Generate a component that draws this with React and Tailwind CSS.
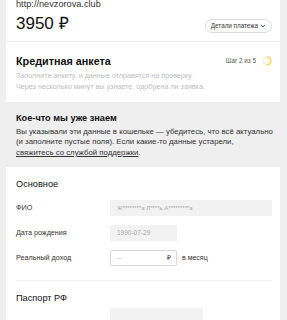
export default function App() {
  const font = { fontFamily: '"Liberation Sans", Arial, sans-serif' };
  return (
    <div className="w-[287px] h-[320px] overflow-hidden bg-[#efefef] text-[#222]" style={font}>
      <div className="mx-[6px] w-[274px] bg-white">
        <div className="h-[42px] border-b border-[#ececec] pl-[10px] pr-[8px] relative">
          <div className="absolute left-[10px] top-[-1px] text-[9.2px] leading-[11px] text-[#333]">http://nevzorova.club</div>
          <div className="absolute left-[10px] top-[14px] text-[17px] leading-[20px] text-[#111]">3950 ₽</div>
          <div className="absolute right-[8px] top-[19px] h-[14px] px-[5px] rounded-full border border-[#dcdcdc] flex items-center gap-[2px] text-[6.3px] text-[#333]">
            Детали платежа
            <svg width="6" height="6" viewBox="0 0 10 10"><path d="M2 3.5 L5 6.5 L8 3.5" fill="none" stroke="#333" strokeWidth="1.6" /></svg>
          </div>
        </div>
        <div className="h-[60px] pl-[10px] pr-[8px] pt-[12px]">
          <div className="flex items-center justify-between">
            <div className="text-[10.8px] leading-[14px] font-semibold text-[#111]">Кредитная анкета</div>
            <div className="flex items-center gap-[6px]">
              <span className="text-[6.3px] text-[#555]">Шаг 2 из 5</span>
              <svg width="10" height="10" viewBox="0 0 20 20">
                <circle cx="10" cy="10" r="7.5" fill="none" stroke="#eeeeee" strokeWidth="3" />
                <path d="M10 2.5 A7.5 7.5 0 0 1 10 17.5" fill="none" stroke="#ffdb4d" strokeWidth="3" />
              </svg>
            </div>
          </div>
          <div className="mt-[2px] text-[7.2px] leading-[11px] text-[#bdbdbd]">
            Заполните анкету, и данные отправятся на проверку.<br />
            Через несколько минут вы узнаете, одобрена ли заявка.
          </div>
        </div>
      </div>
      <div className="h-[65px] pl-[16px] pt-[10px]">
        <div className="text-[9.2px] leading-[12px] font-bold text-[#111]">Кое-что мы уже знаем</div>
        <div className="mt-[3px] text-[7.8px] leading-[10.4px] text-[#333]">
          Вы указывали эти данные в кошельке — убедитесь, что всё актуально<br />
          (и заполните пустые поля). Если какие-то данные устарели,<br />
          <span className="underline">свяжитесь со службой поддержки</span>.
        </div>
      </div>
      <div className="mx-[6px] w-[274px] bg-white pl-[10px] pr-[8px] pt-[11px] h-[160px]">
        <div className="text-[9.2px] leading-[12px] text-[#111]">Основное</div>
        <div className="mt-[10px] flex items-center h-[16px]">
          <div className="w-[94px] text-[7.2px] text-[#333]">ФИО</div>
          <div className="flex-1 h-[16px] bg-[#f2f2f2] flex items-center pl-[7px] text-[6px] text-[#aaa]">Ж********а Л****ь А*********а</div>
        </div>
        <div className="mt-[9px] flex items-center h-[16px]">
          <div className="w-[94px] text-[7.2px] text-[#333]">Дата рождения</div>
          <div className="w-[67px] h-[16px] bg-[#f2f2f2] flex items-center pl-[7px] text-[6.5px] text-[#aaa]">1990-07-29</div>
        </div>
        <div className="mt-[9px] flex items-center h-[16px]">
          <div className="w-[94px] text-[7.2px] text-[#333]">Реальный доход</div>
          <div className="w-[67px] h-[16px] border border-[#d9d9d9] rounded-[2px] flex items-center justify-between pl-[5px] pr-[5px] text-[#bbb]">
            <span className="text-[6px]">—</span>
            <span className="text-[7px] text-[#333]">₽</span>
          </div>
          <div className="ml-[5px] text-[7px] text-[#333]">в месяц</div>
        </div>
        <div className="mt-[14px] border-t border-[#f0f0f0]" />
        <div className="mt-[11px] text-[9.2px] leading-[12px] text-[#111]">Паспорт РФ</div>
        <div className="mt-[4px] ml-[94px] w-[93px] h-[16px] bg-[#f2f2f2]" />
      </div>
    </div>
  );
}
